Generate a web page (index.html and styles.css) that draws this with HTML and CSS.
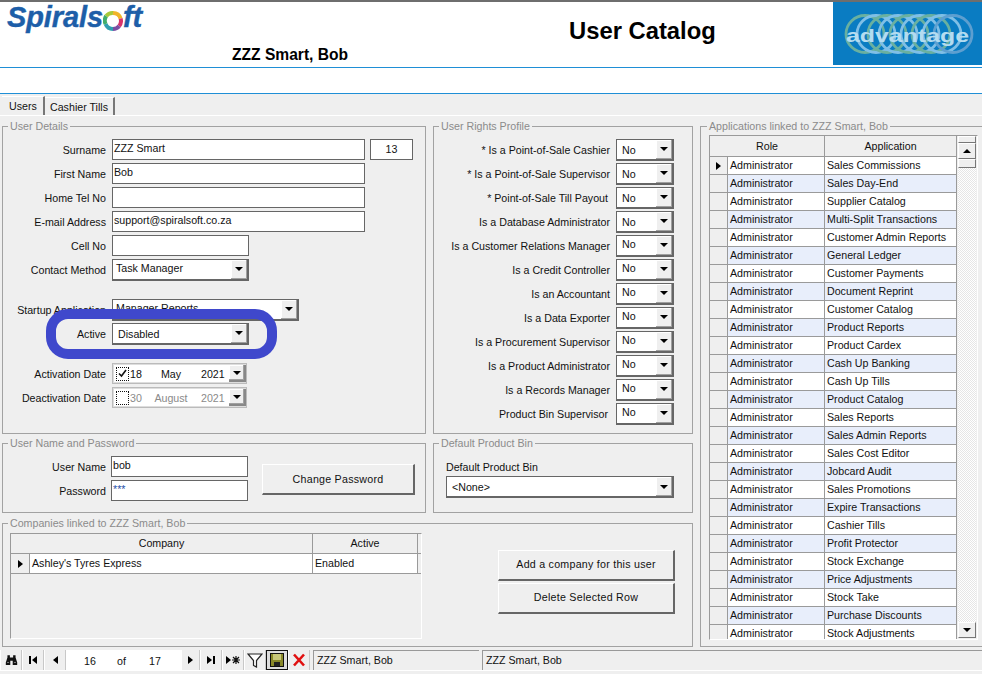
FILE: index.html
```html
<!DOCTYPE html>
<html lang="en">
<head>
<meta charset="utf-8">
<title>User Catalog</title>
<link rel="stylesheet" href="styles.css">
</head>
<body>
<header class="header">
  <div class="brand">
    <div class="logo">
      <span>Spirals</span>
      <svg class="ring" width="20" height="22" viewBox="0 0 20 22">
        <path d="M10 3a8 8 0 0 1 7.6 5.6" fill="none" stroke="#f0b429" stroke-width="4"/>
        <path d="M17.6 8.6a8 8 0 0 1-1.4 7.4" fill="none" stroke="#d8336b" stroke-width="4"/>
        <path d="M16.200 16a8 8 0 0 1-6.200 3" fill="none" stroke="#7b4fa3" stroke-width="4"/>
        <path d="M10 19a8 8 0 0 1-7.400-5" fill="none" stroke="#2f9fb0" stroke-width="4"/>
        <path d="M2.600 14a8 8 0 0 1 .6-8" fill="none" stroke="#3fae6b" stroke-width="4"/>
        <path d="M3.200 6A8 8 0 0 1 10 3" fill="none" stroke="#a7c93a" stroke-width="4"/>
      </svg>
      <span>ft</span>
    </div>
    <div class="person">ZZZ Smart, Bob</div>
  </div>
  <h1 class="title">User Catalog</h1>
  <svg class="advantage" width="149" height="63" viewBox="0 0 149 63">
    <rect width="149" height="63" fill="#0a7cc2"/>
    <g fill="none" stroke-width="2.800">
      <ellipse cx="32" cy="32" rx="19" ry="18.500" stroke="#69b0a0"/>
      <ellipse cx="43" cy="32" rx="19" ry="18.500" stroke="#7fbfe6"/>
      <ellipse cx="54" cy="32" rx="19" ry="18.500" stroke="#69b0a0"/>
      <ellipse cx="65" cy="32" rx="19" ry="18.500" stroke="#7fbfe6"/>
      <ellipse cx="76" cy="32" rx="19" ry="18.500" stroke="#69b0a0"/>
      <ellipse cx="87" cy="32" rx="19" ry="18.500" stroke="#7fbfe6"/>
      <ellipse cx="98" cy="32" rx="19" ry="18.500" stroke="#69b0a0"/>
      <ellipse cx="109" cy="32" rx="19" ry="18.500" stroke="#7fbfe6"/>
      <ellipse cx="120" cy="32" rx="19" ry="18.500" stroke="#5d9fd0"/>
    </g>
    <text class="advantage-text" x="13" y="40" textLength="123" lengthAdjust="spacingAndGlyphs">advantage</text>
  </svg>
</header>
<div class="band"></div>
<nav class="tabs">
  <span class="tab tab-active">Users</span>
  <span class="tab tab-other">Cashier Tills</span>
</nav>
<main class="layout">
  <fieldset class="panel details">
    <legend>User Details</legend>
    <div class="row"><label class="lbl">Surname</label><span class="field w253">ZZZ Smart</span><span class="field code">13</span></div>
    <div class="row"><label class="lbl">First Name</label><span class="field w253">Bob</span></div>
    <div class="row"><label class="lbl">Home Tel No</label><span class="field w253"></span></div>
    <div class="row"><label class="lbl">E-mail Address</label><span class="field w253">support@spiralsoft.co.za</span></div>
    <div class="row"><label class="lbl">Cell No</label><span class="field w137"></span></div>
    <div class="row"><label class="lbl">Contact Method</label><span class="combo w137"><span class="combo-text">Task Manager</span><span class="drop"><i class="tri"></i></span></span></div>
    <div class="row row-spaced"><label class="lbl">Startup Application</label><span class="combo w187"><span class="combo-text">Manager Reports</span><span class="drop"><i class="tri"></i></span></span></div>
    <div class="row row-marked"><label class="lbl">Active</label><span class="combo w137"><span class="combo-text combo-mid">Disabled</span><span class="drop"><i class="tri"></i></span></span><span class="marker"></span></div>
    <div class="row row-spaced"><label class="lbl">Activation Date</label>
      <span class="date"><span class="check"><svg width="11" height="11" viewBox="0 0 11 11"><path d="M2 5.500l2.500 2.500 4.500-6" fill="none" stroke="#111" stroke-width="1.600"/></svg></span><span class="d1">18</span><span class="d2">May</span><span class="d3">2021</span><span class="drop"><i class="tri"></i></span></span></div>
    <div class="row"><label class="lbl">Deactivation Date</label>
      <span class="date date-off"><span class="check"></span><span class="d1">30</span><span class="d2">August</span><span class="d3">2021</span><span class="drop"><i class="tri"></i></span></span></div>
  </fieldset>

  <fieldset class="panel rights">
    <legend>User Rights Profile</legend>
    <div class="row"><label class="lbl lbl-r">* Is a Point-of-Sale Cashier</label><span class="combo yn"><span class="combo-text combo-mid">No</span><span class="drop"><i class="tri"></i></span></span></div>
    <div class="row"><label class="lbl lbl-r">* Is a Point-of-Sale Supervisor</label><span class="combo yn"><span class="combo-text combo-mid">No</span><span class="drop"><i class="tri"></i></span></span></div>
    <div class="row"><label class="lbl lbl-r lbl-in">* Point-of-Sale Till Payout</label><span class="combo yn"><span class="combo-text combo-mid">No</span><span class="drop"><i class="tri"></i></span></span></div>
    <div class="row"><label class="lbl lbl-r">Is a Database Administrator</label><span class="combo yn"><span class="combo-text combo-mid">No</span><span class="drop"><i class="tri"></i></span></span></div>
    <div class="row"><label class="lbl lbl-r">Is a Customer Relations Manager</label><span class="combo yn"><span class="combo-text">No</span><span class="drop"><i class="tri"></i></span></span></div>
    <div class="row"><label class="lbl lbl-r">Is a Credit Controller</label><span class="combo yn"><span class="combo-text">No</span><span class="drop"><i class="tri"></i></span></span></div>
    <div class="row"><label class="lbl lbl-r">Is an Accountant</label><span class="combo yn"><span class="combo-text">No</span><span class="drop"><i class="tri"></i></span></span></div>
    <div class="row"><label class="lbl lbl-r">Is a Data Exporter</label><span class="combo yn"><span class="combo-text">No</span><span class="drop"><i class="tri"></i></span></span></div>
    <div class="row"><label class="lbl lbl-r">Is a Procurement Supervisor</label><span class="combo yn"><span class="combo-text">No</span><span class="drop"><i class="tri"></i></span></span></div>
    <div class="row"><label class="lbl lbl-r">Is a Product Administrator</label><span class="combo yn"><span class="combo-text">No</span><span class="drop"><i class="tri"></i></span></span></div>
    <div class="row"><label class="lbl lbl-r">Is a Records Manager</label><span class="combo yn"><span class="combo-text">No</span><span class="drop"><i class="tri"></i></span></span></div>
    <div class="row"><label class="lbl lbl-r lbl-in">Product Bin Supervisor</label><span class="combo yn"><span class="combo-text">No</span><span class="drop"><i class="tri"></i></span></span></div>
  </fieldset>

  <fieldset class="panel apps">
    <legend>Applications linked to ZZZ Smart, Bob</legend>
    <div class="apps-grid">
      <div class="apps-table">
        <div class="grid-head"><span class="h-role">Role</span><span class="h-app">Application</span></div>
        <div class="app-row"><span class="rh"><i class="pointer"></i></span><span class="c-role">Administrator</span><span class="c-app">Sales Commissions</span></div>
        <div class="app-row alt"><span class="rh"></span><span class="c-role">Administrator</span><span class="c-app">Sales Day-End</span></div>
        <div class="app-row"><span class="rh"></span><span class="c-role">Administrator</span><span class="c-app">Supplier Catalog</span></div>
        <div class="app-row alt"><span class="rh"></span><span class="c-role">Administrator</span><span class="c-app">Multi-Split Transactions</span></div>
        <div class="app-row"><span class="rh"></span><span class="c-role">Administrator</span><span class="c-app">Customer Admin Reports</span></div>
        <div class="app-row alt"><span class="rh"></span><span class="c-role">Administrator</span><span class="c-app">General Ledger</span></div>
        <div class="app-row"><span class="rh"></span><span class="c-role">Administrator</span><span class="c-app">Customer Payments</span></div>
        <div class="app-row alt"><span class="rh"></span><span class="c-role">Administrator</span><span class="c-app">Document Reprint</span></div>
        <div class="app-row"><span class="rh"></span><span class="c-role">Administrator</span><span class="c-app">Customer Catalog</span></div>
        <div class="app-row alt"><span class="rh"></span><span class="c-role">Administrator</span><span class="c-app">Product Reports</span></div>
        <div class="app-row"><span class="rh"></span><span class="c-role">Administrator</span><span class="c-app">Product Cardex</span></div>
        <div class="app-row alt"><span class="rh"></span><span class="c-role">Administrator</span><span class="c-app">Cash Up Banking</span></div>
        <div class="app-row"><span class="rh"></span><span class="c-role">Administrator</span><span class="c-app">Cash Up Tills</span></div>
        <div class="app-row alt"><span class="rh"></span><span class="c-role">Administrator</span><span class="c-app">Product Catalog</span></div>
        <div class="app-row"><span class="rh"></span><span class="c-role">Administrator</span><span class="c-app">Sales Reports</span></div>
        <div class="app-row alt"><span class="rh"></span><span class="c-role">Administrator</span><span class="c-app">Sales Admin Reports</span></div>
        <div class="app-row"><span class="rh"></span><span class="c-role">Administrator</span><span class="c-app">Sales Cost Editor</span></div>
        <div class="app-row alt"><span class="rh"></span><span class="c-role">Administrator</span><span class="c-app">Jobcard Audit</span></div>
        <div class="app-row"><span class="rh"></span><span class="c-role">Administrator</span><span class="c-app">Sales Promotions</span></div>
        <div class="app-row alt"><span class="rh"></span><span class="c-role">Administrator</span><span class="c-app">Expire Transactions</span></div>
        <div class="app-row"><span class="rh"></span><span class="c-role">Administrator</span><span class="c-app">Cashier Tills</span></div>
        <div class="app-row alt"><span class="rh"></span><span class="c-role">Administrator</span><span class="c-app">Profit Protector</span></div>
        <div class="app-row"><span class="rh"></span><span class="c-role">Administrator</span><span class="c-app">Stock Exchange</span></div>
        <div class="app-row alt"><span class="rh"></span><span class="c-role">Administrator</span><span class="c-app">Price Adjustments</span></div>
        <div class="app-row"><span class="rh"></span><span class="c-role">Administrator</span><span class="c-app">Stock Take</span></div>
        <div class="app-row alt"><span class="rh"></span><span class="c-role">Administrator</span><span class="c-app">Purchase Discounts</span></div>
        <div class="app-row"><span class="rh"></span><span class="c-role">Administrator</span><span class="c-app">Stock Adjustments</span></div>
      </div>
      <div class="scrollbar">
        <span class="sb-cap"></span>
        <span class="sb-btn"><i class="tri tri-up"></i></span>
        <span class="sb-thumb"></span>
        <span class="sb-track"></span>
        <span class="sb-btn"><i class="tri"></i></span>
      </div>
    </div>
  </fieldset>

  <fieldset class="panel login">
    <legend>User Name and Password</legend>
    <div class="login-body">
      <div class="login-fields">
        <div class="row"><label class="lbl lbl-tight">User Name</label><span class="field w137">bob</span></div>
        <div class="row"><label class="lbl lbl-tight">Password</label><span class="field w137 pw">***</span></div>
      </div>
      <button class="btn btn-pw" type="button">Change Password</button>
    </div>
  </fieldset>

  <fieldset class="panel bin">
    <legend>Default Product Bin</legend>
    <div class="bin-label">Default Product Bin</div>
    <span class="combo w227"><span class="combo-text combo-mid">&lt;None&gt;</span><span class="drop"><i class="tri"></i></span></span>
  </fieldset>

  <fieldset class="panel companies">
    <legend>Companies linked to ZZZ Smart, Bob</legend>
    <div class="companies-body">
      <div class="co-grid">
        <div class="co-head"><span class="co-h1">Company</span><span class="co-h2">Active</span></div>
        <div class="co-row"><span class="co-rh"><i class="pointer"></i></span><span class="co-c1">Ashley's Tyres Express</span><span class="co-c2">Enabled</span></div>
      </div>
      <div class="co-actions">
        <button class="btn" type="button">Add a company for this user</button>
        <button class="btn" type="button">Delete Selected Row</button>
      </div>
    </div>
  </fieldset>
</main>
<footer class="toolbar">
  <span class="tool tool-find">
    <svg width="13" height="12" viewBox="0 0 16 14"><path d="M3 1h3v3h4V1h3v3l2 6v3H9.500V8h-3v5H1v-3l2-6z" fill="#111"/><path d="M2.500 10h2.500M11 10h2.500" stroke="#9a9a9a"/></svg>
  </span>
  <span class="tool"><i class="bar"></i><i class="arrow-l"></i></span>
  <span class="tool"><i class="arrow-l"></i></span>
  <span class="pager"><span class="p1">16</span><span class="p2">of</span><span class="p3">17</span></span>
  <span class="tool tool-next"><i class="arrow-r"></i></span>
  <span class="tool"><i class="arrow-r"></i><i class="bar"></i></span>
  <span class="tool"><i class="arrow-r"></i><svg width="8" height="8" viewBox="0 0 8 8"><path d="M4 0v8M0 4h8M1 1l6 6M7 1L1 7" stroke="#111" stroke-width="1.200"/></svg></span>
  <span class="tool">
    <svg width="16" height="15" viewBox="0 0 16 15"><path d="M1 1h14L9.500 7.500V14l-3-1.500v-5z" fill="#fff" stroke="#222" stroke-width="1.200"/></svg>
  </span>
  <span class="tool tool-save">
    <svg width="14" height="14" viewBox="0 0 14 14"><rect x=".5" y=".5" width="13" height="13" fill="#8a8a2a" stroke="#111"/><rect x="3" y="1" width="8" height="6" fill="#c8c87a"/><rect x="4" y="9" width="6" height="4" fill="#222"/></svg>
  </span>
  <span class="tool">
    <svg width="14" height="14" viewBox="0 0 14 14"><path d="M2 1.500l10 11M12 1.500L2 12.500" stroke="#e01010" stroke-width="2.600"/></svg>
  </span>
  <span class="status s1">ZZZ Smart, Bob</span>
  <span class="status s2">ZZZ Smart, Bob</span>
</footer>
</body>
</html>
```
FILE: styles.css
```css
* { box-sizing: border-box; }
html, body { margin: 0; padding: 0; }
body {
  width: 982px; height: 674px; overflow: hidden;
  background: #efefef; color: #111;
  font: 10.67px/14px "Liberation Sans", Arial, sans-serif;
}
.header {
  height: 68px; display: flex; align-items: flex-start;
  background: #fff; border-top: 2px solid #6e6e6e; border-bottom: 1px solid #1f8fd6;
}
.brand { width: 569px; flex: none; }
.logo {
  display: flex; align-items: flex-start; height: 42px; padding: 0 0 0 7px;
  font: italic bold 29px/30px "Liberation Sans", Arial, sans-serif;
  letter-spacing: -.1px; color: #1d5ea8; -webkit-text-stroke: .4px #1d5ea8;
}
.ring { margin: 8px 0 0 0; flex: none; }
.person {
  margin: 2px 0 0 232px;
  font: bold 15.6px/18px "Liberation Sans", Arial, sans-serif; color: #000;
}
.title {
  margin: 15px 0 0; font: bold 23.8px/28px "Liberation Sans", Arial, sans-serif; color: #000;
}
.advantage { margin-left: auto; flex: none; }
.advantage-text { font: bold 19px "Liberation Sans", Arial, sans-serif; fill: #b4dcf0; }
.band { height: 26px; background: #fff; border-bottom: 1px solid #1f8fd6; }
.tabs {
  height: 22px; padding: 2px 0 0 2px; display: flex; align-items: stretch;
  border-bottom: 1px solid #fff; background: #efefef;
}
.tab {
  padding: 2px 0 0 5px; border-top: 1px solid #fff; border-right: 2px solid #777;
  color: #111; margin-top: 1px;
}
.tab-active { padding: 2px 0 0 7px; margin-top: 0; width: 43px; }
.tab-other { width: 70px; }
.layout {
  display: grid; padding: 3px 0 0 2px;
  grid-template-columns: 424px 260px 282px;
  column-gap: 7px; row-gap: 3px;
  grid-template-rows: 315px 76px 131px;
}
.panel {
  margin: 0; padding: 6px 0 0; min-width: 0;
  border: 1px solid #a2a2a2;
  position: relative;
}
.panel legend {
  margin-left: 5px; padding: 0 2px; color: #8b8b8b; line-height: 14px;
}
.apps { grid-column: 3; grid-row: 1 / 4; border-right: 0; margin-right: -20px; padding: 2px 0 0; }
.apps legend { margin-left: 6px; }
.companies { grid-column: 1 / 3; padding-top: 3px; }
.login { margin-top: -1px; padding-top: 6px; }
.bin { margin-top: -1px; padding: 10px 0 0; }

.row { display: flex; align-items: center; height: 21px; margin-bottom: 3px; }
.row-spaced { margin-top: 19px; }
.row-marked { position: relative; }
.lbl { width: 103px; margin-right: 6px; padding-top: 1px; text-align: right; flex: none; white-space: nowrap; }
.lbl-r { width: 176px; }
.lbl-in { padding-right: 2px; }
.lbl-tight { margin-right: 5px; }
.field {
  display: block; height: 21px; background: #fff; border: 1px solid #666;
  padding: 1px 1px; overflow: hidden; white-space: nowrap; color: #111;
}
.w253 { width: 253px; }
.w137 { width: 137px; }
.w187 { width: 187px; }
.w227 { width: 228px; margin-left: 12px; }
.code { width: 43px; margin-left: 5px; text-align: center; padding-top: 2px; }
.pw { color: #1f4fa8; }
.combo {
  display: flex; height: 22px; background: #fff; flex: none;
  border: 1px solid #666; border-right: 2px solid #666; border-bottom: 2px solid #666;
}
.yn { width: 58px; }
.combo-text { flex: 1; padding: 1px 0 0 3px; overflow: hidden; white-space: nowrap; }
.combo-mid { padding: 3px 0 0 5px; }
.yn .combo-text { padding-left: 5px; }
.drop {
  width: 17px; flex: none; display: flex; align-items: center; justify-content: center;
  background: #efefef; border-left: 1px solid #fff; box-shadow: inset -1px -1px 0 #a0a0a0, inset 1px 1px 0 #fff;
}
.tri {
  display: block; width: 0; height: 0;
  border-left: 4px solid transparent; border-right: 4px solid transparent; border-top: 4px solid #000;
}
.tri-up { border-top: 0; border-bottom: 4px solid #000; }
.marker {
  position: absolute; left: 43px; top: -14px; width: 231px; height: 50px;
  border: 10px solid #3f48cc; border-radius: 22px; pointer-events: none;
}
.date {
  width: 135px; height: 21px; display: flex; align-items: center; flex: none; position: relative;
  background: #fff; border: 1px solid #bbb; box-shadow: inset 0 0 0 1px #ddd; padding-left: 3px;
}
.date .drop { margin-left: auto; height: 17px; border: 1px solid #888; border-width: 0 2px 2px 0; width: 17px; }
.check {
  width: 13px; height: 14px; border: 1px dotted #111; flex: none; display: flex;
  align-items: center; justify-content: center; background: #fff;
}
.d1 { margin-left: 1px; width: 21px; }
.d2 { width: 40px; text-align: center; }
.d3 { margin-left: 10px; width: 25px; }
.date-off .d1, .date-off .d2, .date-off .d3 { color: #8a8a8a; }

.login-body { display: flex; align-items: flex-start; }
.login-fields { width: 259px; flex: none; }
.btn {
  display: block; font: 10.67px/14px "Liberation Sans", Arial, sans-serif; color: #111;
  letter-spacing: .25px; background: #efefef; padding: 0 0 2px; flex: none; width: 177px; height: 31px;
  border: 1px solid; border-color: #fff #666 #666 #fff; border-width: 1px 2px 2px 1px;
}
.btn-pw { width: 153px; margin: 8px 0 0; padding: 0; }
.bin-label { height: 16px; padding-left: 12px; }

.companies-body { display: flex; align-items: flex-start; padding-left: 7px; }
.co-grid {
  width: 412px; height: 106px; flex: none;
  border: 1px solid; border-color: #9a9a9a #fff #fff #9a9a9a;
}
.co-head { display: flex; height: 20px; border-bottom: 1px solid #9a9a9a; text-align: center; line-height: 19px; }
.co-h1 { width: 302px; border-right: 1px solid #9a9a9a; }
.co-h2 { width: 105px; border-right: 1px solid #9a9a9a; }
.co-row { display: flex; height: 20px; border-bottom: 1px solid #9a9a9a; line-height: 19px; }
.co-rh { width: 19px; display: flex; align-items: center; justify-content: center; border-right: 1px solid #9a9a9a; }
.co-c1 { width: 283px; background: #fff; padding-left: 2px; border-right: 1px solid #9a9a9a; }
.co-c2 { width: 105px; background: #fff; padding-left: 2px; border-right: 1px solid #9a9a9a; }
.pointer {
  display: block; width: 0; height: 0;
  border-top: 4px solid transparent; border-bottom: 4px solid transparent; border-left: 5px solid #000;
}
.co-actions { display: flex; flex-direction: column; gap: 2px; margin: 17px 0 0 76px; }

.apps-grid {
  display: flex; width: 269px; height: 505px; overflow: hidden; margin-left: 8px;
  border: 1px solid; border-color: #9a9a9a #fff #fff #9a9a9a;
}
.apps-table { width: 247px; flex: none; }
.grid-head { display: flex; height: 21px; border-bottom: 1px solid #9a9a9a; text-align: center; line-height: 20px; }
.h-role { width: 115px; border-right: 1px solid #9a9a9a; }
.h-app { width: 132px; border-right: 1px solid #9a9a9a; }
.app-row { display: flex; height: 18px; line-height: 17px; }
.rh {
  width: 18px; display: flex; align-items: center; justify-content: center;
  border-right: 1px solid #9a9a9a; border-bottom: 1px solid #9a9a9a;
}
.c-role, .c-app { padding-left: 2px; background: #fff; border-right: 1px solid #9a9a9a; border-bottom: 1px solid #9a9a9a; white-space: nowrap; }
.c-role { width: 97px; }
.c-app { width: 132px; }
.alt .c-role, .alt .c-app { background: #e8eefb; }
.scrollbar { width: 18px; margin-left: 1px; display: flex; flex-direction: column; height: 502px; }
.sb-cap, .sb-btn, .sb-thumb {
  display: flex; align-items: center; justify-content: center; flex: none;
  background: #efefef; border: 1px solid; border-color: #fff #777 #777 #fff;
}
.sb-cap { height: 7px; }
.sb-btn { height: 16px; }
.sb-thumb { height: 9px; }
.sb-track {
  flex: 1;
  background: repeating-conic-gradient(#fff 0 25%, #e6e6e6 0 50%) 0 0 / 2px 2px;
}

.toolbar {
  position: relative; height: 21px; margin-top: 3px; display: flex; align-items: stretch;
  border-bottom: 1px solid #fff; background: #efefef;
}
.tool {
  width: 22px; flex: none; display: flex; align-items: center; justify-content: center; gap: 1px;
  border-right: 1px solid #c8c8c8; border-left: 1px solid #fff;
}
.tool-next { width: 19px; }
.tool-save { border: 1px solid #111; background: #ddd; }
.bar { display: block; width: 2px; height: 8px; background: #000; }
.arrow-l, .arrow-r {
  display: block; width: 0; height: 0;
  border-top: 4px solid transparent; border-bottom: 4px solid transparent;
}
.arrow-l { border-right: 5px solid #000; }
.arrow-r { border-left: 5px solid #000; }
.pager { width: 115px; flex: none; background: #fff; display: flex; align-items: center; padding-top: 1px; }
.p1 { margin-left: 18px; width: 33px; }
.p2 { width: 32px; }
.status {
  display: flex; align-items: center; padding: 0 0 2px 3px; white-space: nowrap;
  border-top: 1px solid #999; border-left: 1px solid #999;
}
.s1 { width: 166px; margin-left: 3px; }
.s2 { flex: 1; margin-left: 3px; }
```
